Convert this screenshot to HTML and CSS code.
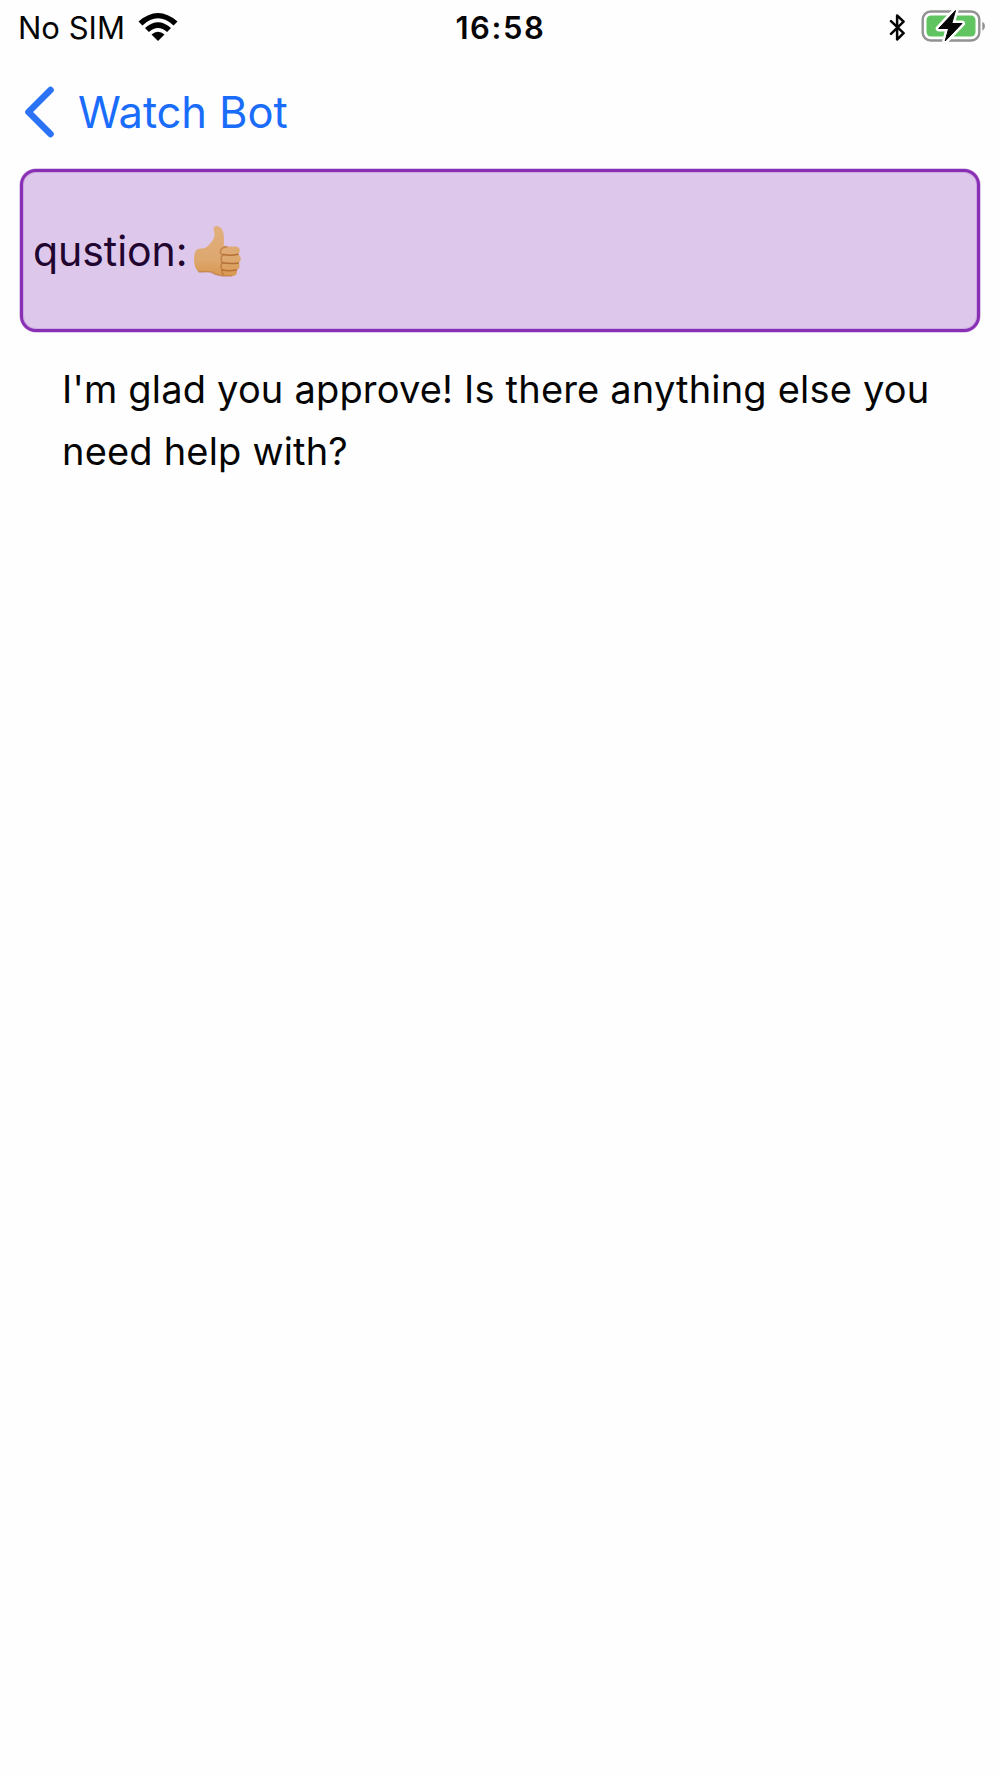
FILE: index.html
```html
<!DOCTYPE html>
<html lang="en">
<head>
<meta charset="utf-8">
<title>Watch Bot</title>
<link rel="stylesheet" href="styles.css">
</head>
<body>
<header class="status">
  <div class="carrier">
    <span class="carrier-name">No SIM</span>
    <svg class="wifi" width="40" height="30" viewBox="0 0 40 30">
      <path d="M.5 9.400Q20-7.600 39.500 9.400L35.600 13.400Q20-.8 4.400 13.400Z"/>
      <path d="M7 16Q20 4.600 33 16L29.100 20Q20 12 10.900 20Z"/>
      <path d="M13.500 22.400Q20 17 26.500 22.400L20 29Z"/>
    </svg>
  </div>
  <span class="time">16:58</span>
  <div class="indicators">
    <svg class="bluetooth" width="18" height="28" viewBox="0 0 18 28">
      <path d="M2 8.200 14.600 20.200 8.100 26.500V2.500L14.600 8.600 2 20.800"/>
    </svg>
    <svg class="battery" width="66" height="34" viewBox="0 0 66 34">
      <rect class="shell" x="1.700" y="2.500" width="56.600" height="29" rx="8"/>
      <rect class="charge" x="5.500" y="6.500" width="49" height="21" rx="4.500"/>
      <path class="terminal" d="M61.300 12.700Q64 14 64 17T61.300 21.800Z"/>
      <path class="bolt-gap" d="M34.500 1.500 17.700 19.500H27.600L24.200 32 41 14.500H30.800Z"/>
      <path class="bolt" d="M34.500 1.500 17.700 19.500H27.600L24.200 32 41 14.500H30.800Z"/>
    </svg>
  </div>
</header>
<nav class="nav">
  <svg class="back" width="32" height="54" viewBox="0 0 32 54">
    <path d="M27.500 5 5.500 27 27.500 49"/>
  </svg>
  <span class="nav-title">Watch Bot</span>
</nav>
<main>
  <section class="question">
    <span class="question-label">qustion:</span>
    <svg class="thumb" width="48" height="52" viewBox="0 0 48 52">
      <defs>
        <linearGradient id="skin" x1="0" y1="0" x2="0" y2="1">
          <stop offset="0" stop-color="#e2ae7b"/>
          <stop offset=".65" stop-color="#dda870"/>
          <stop offset="1" stop-color="#d8984f"/>
        </linearGradient>
      </defs>
      <path fill="url(#skin)" d="M20.500 3.500C20.500.5 25-.2 28 3C31.500 7 31 13 30.800 19.500Q31.500 22 35 21.500L43 21.500C47.500 22 47.800 27 45 29.300C48.800 31.500 48.500 36 45.500 38C47.800 41 46.500 44 43.500 45C45 48.500 42.500 51 38.500 51C30 51.500 24 50.500 19 47.500C14 45.500 9 48 5.500 46.500C.5 43 .2 32 2.300 26.500C4 22.500 9 24.500 13 22.500C18 18.500 20 15 21.300 12C22 8.500 20.700 6 20.500 3.500Z"/>
      <path class="crease" d="M30 29.500Q38 31 45 29.300M29 37.800Q38 39.200 45.500 38M29 45Q36 46.500 43.500 45"/>
      <path class="fold" d="M34 21.800Q28 22.500 27.500 26T30 30Q26.500 33 29.500 37.800Q26.500 41 29.500 45Q28 47 30.500 49.500"/>
      <path class="shade" d="M5.500 46.500C9 48 14 45.500 19 47.500C24 50.500 30 51.500 38.500 51"/>
    </svg>
  </section>
  <p class="answer">I'm glad you approve! Is there anything else you need help with?</p>
</main>
</body>
</html>
```
FILE: styles.css
```css
body {
  margin: 0;
  min-height: 1778px;
  background: #fefefe;
  color: #050505;
  font-family: Inter, "Liberation Sans", sans-serif;
}

svg {
  display: block;
  flex: none;
}

.status {
  display: grid;
  grid-template-columns: 1fr auto 1fr;
  align-items: center;
  height: 54px;
  padding: 0 13px 0 18px;
  font-size: 31px;
}

.carrier {
  display: flex;
  align-items: center;
  gap: 13px;
}

.time {
  margin-right: 4px;
  font-weight: 600;
  letter-spacing: 1.6px;
}

.indicators {
  display: flex;
  align-items: center;
  justify-content: flex-end;
  gap: 14px;
}

.battery {
  margin-top: -2px;
}

.bluetooth {
  fill: none;
  stroke: #050505;
  stroke-width: 2.5;
  stroke-linejoin: round;
  stroke-linecap: round;
}

.shell {
  fill: none;
  stroke: #929292;
  stroke-width: 2.4;
}

.charge {
  fill: #60c460;
}

.terminal {
  fill: #929292;
}

.bolt-gap {
  fill: #fefefe;
  stroke: #fefefe;
  stroke-width: 6;
  stroke-linejoin: round;
}

.bolt {
  fill: #050505;
  stroke: #050505;
  stroke-width: 1;
  stroke-linejoin: round;
}

.nav {
  display: flex;
  align-items: center;
  gap: 23px;
  box-sizing: border-box;
  height: 115px;
  padding: 1px 0 0 23px;
  color: #1a6dfb;
}

.back {
  fill: none;
  stroke: #2b72f5;
  stroke-width: 6.6;
  stroke-linecap: round;
  stroke-linejoin: round;
}

.nav-title {
  font-size: 43.500px;
  letter-spacing: -0.1px;
}

.question {
  display: flex;
  align-items: center;
  box-sizing: border-box;
  height: 163px;
  margin: 0 20px;
  padding-left: 10px;
  border: 3px solid #882fb5;
  border-radius: 16px;
  background: #ddc7ea;
  box-shadow: 0 0 0 0.5px #882fb580, inset 0 0 0 1px #882fb530;
  color: #1f0530;
  font-size: 41px;
  gap: 5px;
}

.question-label {
  letter-spacing: -0.05px;
}

.crease,
.fold,
.shade {
  fill: none;
  stroke: #b56f35;
  stroke-width: 1.5;
  stroke-linecap: round;
  stroke-linejoin: round;
}

.fold {
  stroke-opacity: 0.65;
}

.shade {
  stroke-opacity: 0.5;
}

.answer {
  margin: 27px 50px 0 62px;
  font-size: 38px;
  letter-spacing: 0.19px;
  line-height: 61.500px;
}
```
